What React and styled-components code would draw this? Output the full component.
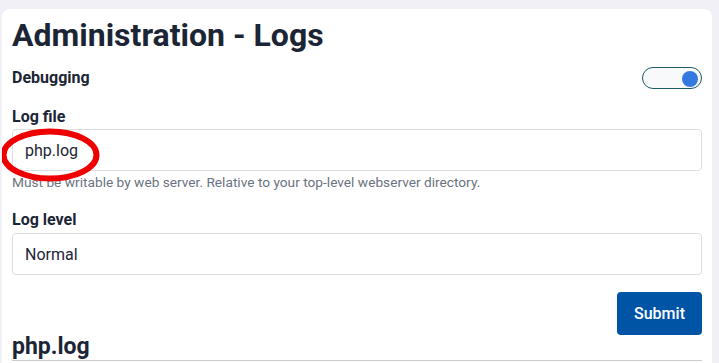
import styled, { createGlobalStyle } from "styled-components";

const GlobalStyle = createGlobalStyle`
  html, body {
    margin: 0;
    padding: 0;
    background: #f1f0f7;
    font-family: Roboto, "Liberation Sans", Arial, sans-serif;
    color: #1b2535;
  }
  * { box-sizing: border-box; }
`;

const Card = styled.div`
  margin: 9px 7px 0 2px;
  padding: 7px 10px 0 10px;
  background: #ffffff;
  border-radius: 8px 8px 0 0;
  height: 354px;
  overflow: hidden;
`;

const Title = styled.h1`
  margin: 0;
  font-size: 32px;
  line-height: 1.2;
  font-weight: 700;
  color: #1b2535;
`;

const SwitchRow = styled.div`
  display: flex;
  align-items: center;
  justify-content: space-between;
  height: 22px;
  margin-top: 13px;
`;

const Label = styled.label`
  display: block;
  font-size: 16px;
  line-height: 24px;
  font-weight: 700;
  color: #1b2535;
`;

const Toggle = styled.span`
  position: relative;
  display: inline-block;
  width: 60px;
  height: 22px;
  border: 1px solid #1d5b65;
  border-radius: 11px;
  background: #f7f9fb;
`;

const Knob = styled.span`
  position: absolute;
  top: 3px;
  right: 3px;
  width: 16px;
  height: 16px;
  border-radius: 50%;
  background: #3478e2;
`;

const Field = styled.div`
  position: relative;
  margin-top: ${(p) => p.$top}px;
`;

const Box = styled.div`
  height: 42px;
  margin-top: ${(p) => p.$gap || 0}px;
  padding: 0 12px;
  display: flex;
  align-items: center;
  border: 1px solid #dcdee2;
  border-radius: 4px;
  font-size: 16px;
  color: #1b2535;
  background: #fff;
`;

const Help = styled.div`
  margin-top: 1px;
  font-size: 13.7px;
  line-height: 20px;
  color: #6b7280;
`;

const Actions = styled.div`
  display: flex;
  justify-content: flex-end;
  margin-top: 17px;
`;

const Button = styled.button`
  width: 85px;
  height: 43px;
  border: none;
  border-radius: 4px;
  background: #0054a6;
  color: #fff;
  font-family: inherit;
  font-size: 16px;
  font-weight: 500;
`;

const SubTitle = styled.h2`
  margin: 1px 0 0 0;
  font-size: 23px;
  line-height: 22px;
  font-weight: 700;
  padding-bottom: 2px;
  border-bottom: 1px solid #cccccc;
  color: #1b2535;
`;

const Circle = styled.svg`
  position: absolute;
  left: -12px;
  top: 23px;
  pointer-events: none;
`;

export default function App() {
  return (
    <>
      <GlobalStyle />
      <Card>
        <Title>Administration - Logs</Title>
        <SwitchRow>
          <Label as="span">Debugging</Label>
          <Toggle>
            <Knob />
          </Toggle>
        </SwitchRow>
        <Field $top={16}>
          <Label>Log file</Label>
          <Box>php.log</Box>
          <Help>Must be writable by web server. Relative to your top-level webserver directory.</Help>
          <Circle width="102" height="56" viewBox="0 0 102 56">
            <ellipse cx="50" cy="27" rx="46.5" ry="23.5" fill="none" stroke="#ee0000" strokeWidth="6" />
          </Circle>
        </Field>
        <Field $top={16}>
          <Label>Log level</Label>
          <Box $gap={1}>Normal</Box>
        </Field>
        <Actions>
          <Button>Submit</Button>
        </Actions>
        <SubTitle>php.log</SubTitle>
      </Card>
    </>
  );
}
